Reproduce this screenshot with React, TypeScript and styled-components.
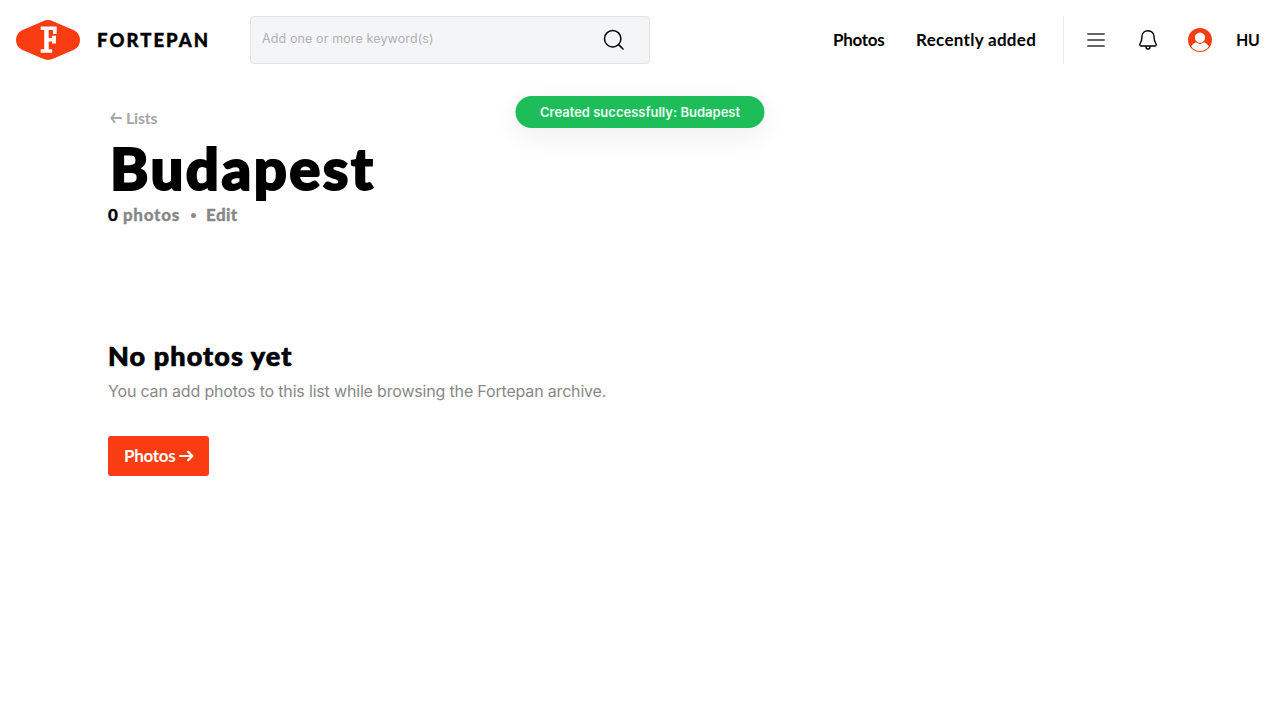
import React from "react";
import styled, { createGlobalStyle } from "styled-components";

const display = `Lato, "Open Sans", sans-serif`;
const body = `Inter, "Liberation Sans", sans-serif`;

const GlobalStyle = createGlobalStyle`
  * { box-sizing: border-box; }
  body { margin: 0; background: #fff; color: #000; font-family: ${body}; -webkit-font-smoothing: antialiased; }
  h1, h2, p { margin: 0; }
  a { color: inherit; text-decoration: none; }
  button { padding: 0; border: 0; background: none; color: inherit; display: block; }
  svg { display: block; flex: none; }
`;

const Header = styled.header`
  display: flex;
  align-items: center;
  height: 80px;
  padding: 0 20px 0 16px;
`;

const Brand = styled.a`
  display: flex;
  align-items: center;
  width: 234px;
  gap: 17px;
`;

const Wordmark = styled.span`
  font: 900 18.5px/24px ${display};
  letter-spacing: 2.05px;
  -webkit-text-stroke: 0.4px currentColor;
  white-space: nowrap;
`;

const Search = styled.form`
  display: flex;
  align-items: center;
  width: 400px;
  height: 48px;
  padding: 0 23px 0 11px;
  background: #f4f5f7;
  border: 1px solid #e3e4e6;
  border-radius: 4px;
`;

const SearchInput = styled.input`
  flex: 1;
  min-width: 0;
  height: 20px;
  margin-bottom: 2px;
  padding: 0;
  border: 0;
  outline: 0;
  background: none;
  font: 400 12.5px/20px ${body};
  letter-spacing: 0.12px;
  &::placeholder { color: #b0b1b3; opacity: 1; }
`;

const Nav = styled.nav`
  display: flex;
  height: 48px;
  align-items: center;
  margin-left: auto;
  border-right: 1px solid #ececec;
`;

const NavLink = styled.a<{ $width: number; $tracking: number }>`
  width: ${(p) => p.$width}px;
  font: 700 17px/24px ${display};
  letter-spacing: ${(p) => p.$tracking}px;
  white-space: nowrap;
`;

const Actions = styled.div`
  display: flex;
  align-items: center;
  gap: 28px;
  padding-left: 20px;
`;

const Language = styled.button`
  width: 24px;
  margin-left: -4px;
  font: 600 16px/24px ${body};
  white-space: nowrap;
`;

const Toast = styled.div`
  position: absolute;
  top: 96px;
  left: 50%;
  transform: translateX(-50%);
  width: 249px;
  height: 32px;
  border-radius: 16px;
  background: #1dbd5a;
  color: #effff4;
  text-align: center;
  white-space: nowrap;
  font: 600 13px/32px ${body};
  box-shadow: 0 8px 28px rgba(0, 0, 0, 0.07);
`;

const Main = styled.main`
  padding: 28px 108px 0;
`;

const BackLink = styled.a`
  display: flex;
  align-items: center;
  gap: 4px;
  height: 19px;
  padding-left: 2px;
  color: #a6a6a6;
  font: 700 16px/19px ${display};
  letter-spacing: -0.2px;
`;

const Title = styled.h1`
  height: 76px;
  padding-left: 2px;
  font: 900 58px/81px ${display};
  letter-spacing: 2.5px;
  -webkit-text-stroke: 2px currentColor;
  white-space: nowrap;
`;

const Meta = styled.div`
  display: flex;
  gap: 5px;
  height: 24px;
  color: #888;
  font: 900 17px/24px ${display};
  letter-spacing: 0.75px;
  -webkit-text-stroke: 0.3px currentColor;
`;

const Count = styled.span`
  color: #000;
  letter-spacing: 0;
`;

const Dot = styled.span`
  align-self: center;
  width: 5px;
  height: 5px;
  margin: 0 5px 0 6px;
  border-radius: 50%;
  background: #888;
`;

const EditLink = styled.a`
  letter-spacing: 0.4px;
`;

const Empty = styled.section`
  padding-top: 111px;
`;

const EmptyTitle = styled.h2`
  font: 900 27px/36px ${display};
  letter-spacing: 1.1px;
  -webkit-text-stroke: 0.7px currentColor;
  white-space: nowrap;
`;

const EmptyText = styled.p`
  margin-top: 5px;
  color: #888;
  font: 400 16px/24px ${body};
  letter-spacing: -0.175px;
  white-space: nowrap;
`;

const Button = styled.a`
  display: flex;
  align-items: center;
  gap: 4px;
  width: 101px;
  height: 40px;
  margin-top: 33px;
  padding-left: 16px;
  border-radius: 3px;
  background: #f93c12;
  color: #fff;
  font: 700 17px/40px ${display};
  letter-spacing: -0.3px;
`;

const Logo = () => (
  <svg width="64" height="40" viewBox="0 0 64 40">
    <path d="M27 1.200Q32-1 37 1.200L58 10.200Q64 13.500 64 20T58 29.800L37 38.800Q32 41 27 38.800L6 29.800Q0 26.500 0 20T6 10.200Z" fill="#f93c12" />
    <path d="M24.700 6.500H40.700V14H37V10H32.700V18H36V15.800H40V23.500H36V21.500H32.700V29.200H36.200V32.800H24.700V29.200H28.200V10H24.700Z" fill="#fff" />
  </svg>
);

const SearchIcon = () => (
  <svg width="24" height="24" viewBox="0 0 24 24" fill="none" stroke="#000" strokeWidth="1.5">
    <circle cx="10.700" cy="10.700" r="8.200" />
    <path d="M16.600 16.600L21.500 21.500" />
  </svg>
);

const MenuIcon = () => (
  <svg width="24" height="24" viewBox="0 0 24 24" stroke="#333" strokeWidth="1.500">
    <path d="M3.300 6H20.700M3.300 12H20.700M3.300 18H20.700" />
  </svg>
);

const BellIcon = () => (
  <svg width="24" height="24" viewBox="0 0 24 24" fill="none" stroke="#000" strokeWidth="1.400" strokeLinejoin="round">
    <path d="M12 2.800C8.300 2.800 5.900 5.500 5.900 9C5.900 12.500 5.600 13.600 4.300 15.100C3.500 16 3.600 18 5 18H19C20.400 18 20.500 16 19.700 15.100C18.400 13.600 18.100 12.500 18.100 9C18.100 5.500 15.700 2.800 12 2.800Z" />
    <path d="M9.900 18.200C9.900 22 14.100 22 14.100 18.200" />
  </svg>
);

const UserIcon = () => (
  <svg width="24" height="24" viewBox="0 0 24 24">
    <circle cx="12" cy="12" r="12" fill="#f93c12" />
    <path d="M3.200 18.500C4.300 16.200 6.200 14.700 8.500 14H15.500C17.800 14.700 19.700 16.200 20.800 18.500C18.800 21.300 15.700 23 12 23S5.200 21.300 3.200 18.500Z" fill="#fff" />
    <circle cx="12" cy="9.700" r="5.700" fill="#fff" stroke="#f93c12" strokeWidth="1.100" />
  </svg>
);

const Arrow = ({ left = false, width = 15 }: { left?: boolean; width?: number }) => (
  <svg width={width} height="12" viewBox="0 0 14 12" preserveAspectRatio="none" fill="none" stroke="currentColor" strokeWidth="2" strokeLinejoin="round" strokeLinecap="round">
    <path d={left ? "M13 6H1.500M5.500 1.800L1.500 6L5.500 10.200" : "M1 6H12.500M8.500 1.800L12.500 6L8.500 10.200"} />
  </svg>
);

export default function App() {
  return (
    <>
      <GlobalStyle />
      <Header>
        <Brand href="#">
          <Logo />
          <Wordmark>FORTEPAN</Wordmark>
        </Brand>
        <Search>
          <SearchInput placeholder="Add one or more keyword(s)" />
          <SearchIcon />
        </Search>
        <Nav>
          <NavLink href="#" $width={83} $tracking={-0.3}>Photos</NavLink>
          <NavLink href="#" $width={147} $tracking={0.3}>Recently added</NavLink>
        </Nav>
        <Actions>
          <button aria-label="Menu"><MenuIcon /></button>
          <button aria-label="Notifications"><BellIcon /></button>
          <button aria-label="Profile"><UserIcon /></button>
          <Language>HU</Language>
        </Actions>
      </Header>
      <Toast role="status">Created successfully: Budapest</Toast>
      <Main>
        <BackLink href="#"><Arrow left width={12} />Lists</BackLink>
        <Title>Budapest</Title>
        <Meta>
          <Count>0</Count>
          <span>photos</span>
          <Dot />
          <EditLink href="#">Edit</EditLink>
        </Meta>
        <Empty>
          <EmptyTitle>No photos yet</EmptyTitle>
          <EmptyText>You can add photos to this list while browsing the Fortepan archive.</EmptyText>
          <Button href="#">Photos<Arrow /></Button>
        </Empty>
      </Main>
    </>
  );
}
